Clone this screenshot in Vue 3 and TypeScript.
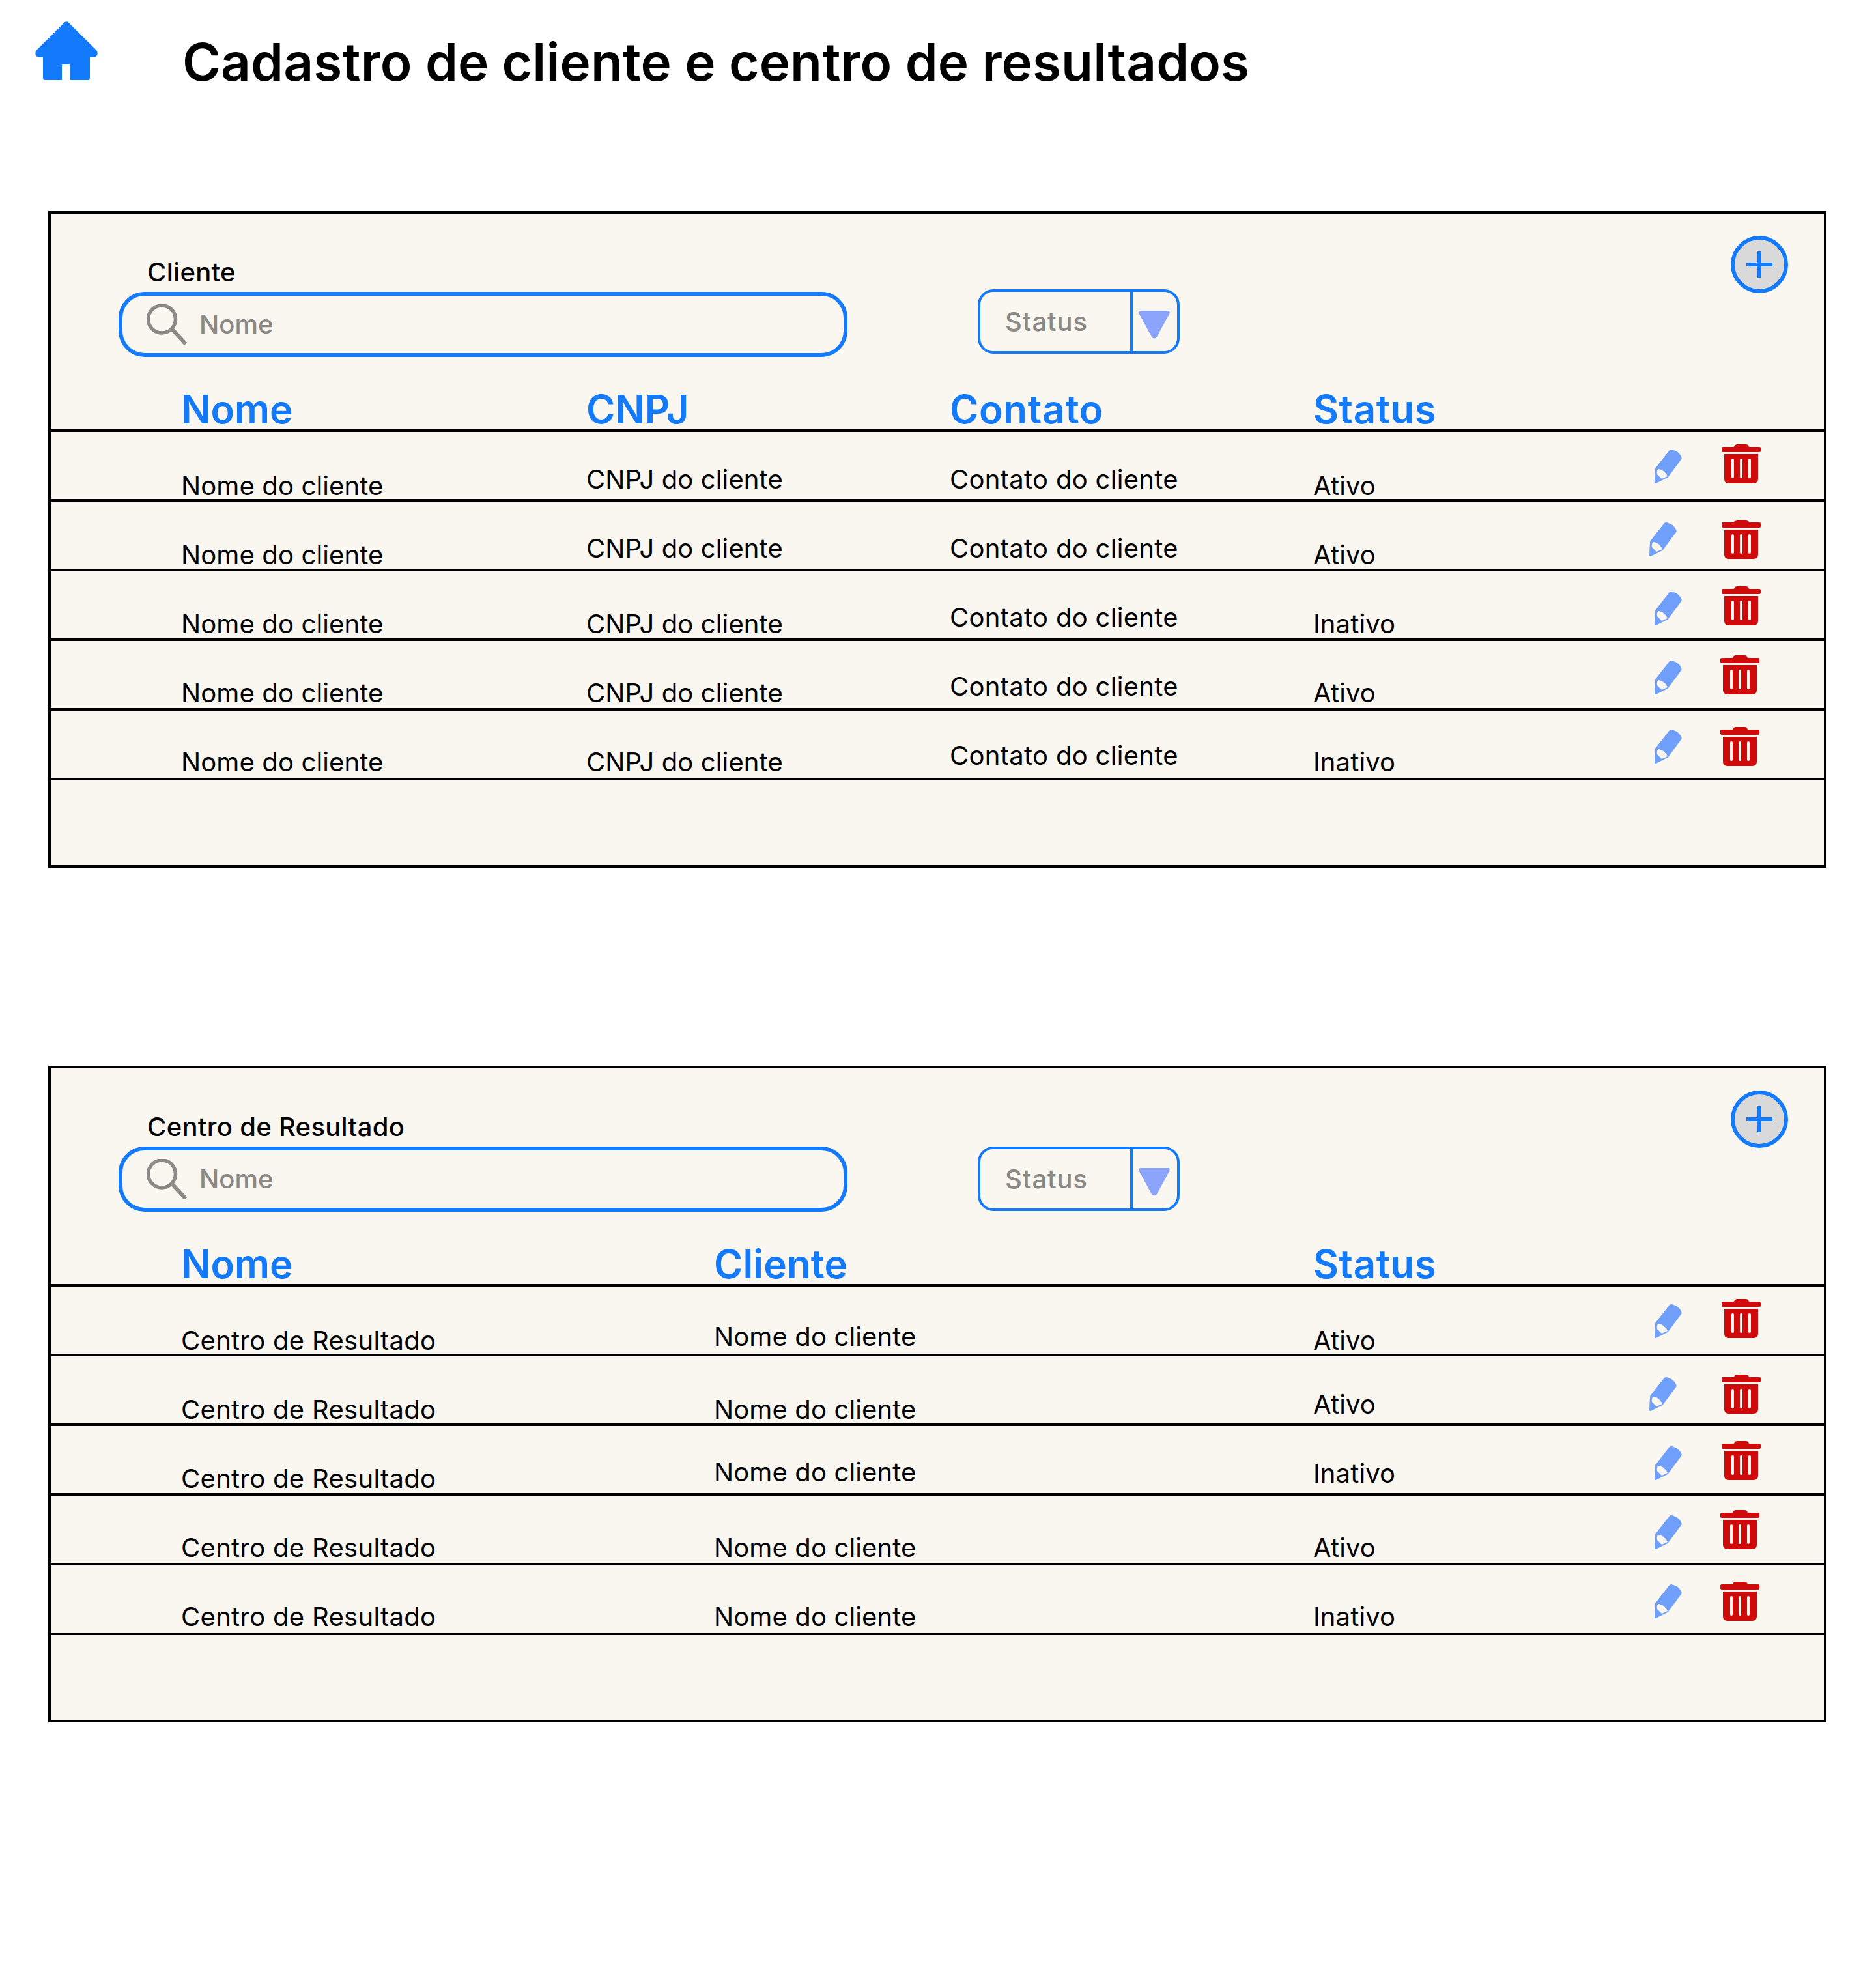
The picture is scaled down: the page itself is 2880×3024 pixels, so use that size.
<script setup lang="ts">
interface Cell {
  text: string;
  hi?: number;
  wide?: boolean;
}
interface Row {
  cells: Cell[];
  pencilTop: number;
  pencilLeft: number;
  trashTop: number;
  trashLeft: number;
}

const geometry = [
  { pencilTop: 27, pencilLeft: 0, trashTop: 19, trashLeft: 0 },
  { pencilTop: 32, pencilLeft: -8, trashTop: 28, trashLeft: 0 },
  { pencilTop: 31, pencilLeft: 0, trashTop: 23, trashLeft: 0 },
  { pencilTop: 30, pencilLeft: 0, trashTop: 22, trashLeft: -2 },
  { pencilTop: 29, pencilLeft: 0, trashTop: 25, trashLeft: -2 },
];

const statuses = ['Ativo', 'Ativo', 'Inativo', 'Ativo', 'Inativo'];

const clientRows: Row[] = geometry.map((g, i) => ({
  ...g,
  cells: [
    { text: 'Nome do cliente' },
    { text: 'CNPJ do cliente', hi: i < 2 ? 10 : 0 },
    { text: 'Contato do cliente', hi: 10, wide: true },
    { text: statuses[i] },
  ],
}));

const nameHi = [6, 0, 10, 0, 0];
const statusHi = [0, 8, 8, 0, 0];
const centerRows: Row[] = geometry.map((g, i) => ({
  ...g,
  cells: [
    { text: 'Centro de Resultado', wide: true },
    { text: 'Nome do cliente', hi: nameHi[i] },
    { text: statuses[i], hi: statusHi[i] },
  ],
}));

const panels = [
  {
    label: 'Cliente',
    cols: 'cols-client',
    select: '',
    headers: [
      { text: 'Nome', track: 0 },
      { text: 'CNPJ', track: 0 },
      { text: 'Contato', track: 0.8 },
      { text: 'Status', track: 0.6 },
    ],
    rows: clientRows,
  },
  {
    label: 'Centro de Resultado',
    cols: 'cols-center',
    select: 'select-low',
    headers: [
      { text: 'Nome', track: 0 },
      { text: 'Cliente', track: 0.2 },
      { text: 'Status', track: 0.6 },
    ],
    rows: centerRows,
  },
];
</script>

<template>
  <div class="page">
    <header class="top">
      <svg class="home" viewBox="0 0 96 90" width="96" height="90">
        <path fill="#147afc" d="M45 1.5Q48-1 51 1.5L94 44Q97 48 95 52Q93 55 89 55L84 55L84 87Q84 90 81 90L53 90L53 66L41 66L41 90L15 90Q12 90 12 87L12 55L7 55Q3 55 1 52Q-1 48 2 44Z" />
      </svg>
      <h1 class="title">Cadastro de cliente e centro de resultados</h1>
    </header>

    <section v-for="panel in panels" :key="panel.label" class="panel">
      <div class="toolbar">
        <div class="search-group">
          <div class="label">{{ panel.label }}</div>
          <div class="search">
            <svg class="lens" viewBox="0 0 62 62" width="62" height="62">
              <ellipse cx="23.5" cy="23" rx="21" ry="21" fill="none" stroke="#8a8985" stroke-width="5.5" />
              <path d="M39 38L60 61" fill="none" stroke="#8a8985" stroke-width="6" />
            </svg>
            <span class="placeholder">Nome</span>
          </div>
        </div>
        <div class="select" :class="panel.select">
          <span class="select-text">Status</span>
          <span class="select-arrow">
            <svg viewBox="0 0 48 43" width="48" height="43">
              <path fill="#8aa4fc" d="M3 0L45 0Q49 0 47 5L28 40Q24 45 20 40L1 5Q-1 0 3 0Z" />
            </svg>
          </span>
        </div>
        <button class="add" type="button" aria-label="Adicionar">
          <svg viewBox="0 0 40 40" width="40" height="40">
            <path d="M17 0H23V17H40V23H23V40H17V23H0V17H17Z" fill="#147afc" />
          </svg>
        </button>
      </div>

      <div class="grid head" :class="panel.cols">
        <div
          v-for="h in panel.headers"
          :key="h.text"
          class="head-cell"
          :style="{ letterSpacing: h.track + 'px' }"
        >{{ h.text }}</div>
      </div>

      <div
        v-for="(row, i) in panel.rows"
        :key="i"
        class="grid row"
        :class="panel.cols"
        :style="{ paddingBottom: i + 'px' }"
      >
        <div
          v-for="(cell, c) in row.cells"
          :key="c"
          class="cell"
          :class="{ wide: cell.wide }"
          :style="{ marginBottom: (cell.hi ?? 0) + 'px' }"
        >{{ cell.text }}</div>
        <div class="actions">
          <svg
            class="pencil"
            viewBox="0 0 42 52"
            width="42"
            height="52"
            :style="{ marginTop: row.pencilTop + 'px', marginLeft: row.pencilLeft + 'px' }"
          >
            <path fill="#6f9ffa" d="M1 29L23 1Q25-.5 28 .5Q39 4 41.5 12.5Q42 14 41 15L21 42Q20 43.5 18 44L2 52Q0 52.5 0 50.5Z" />
            <path fill="#faf7f0" d="M6 30Q15 31 20 41L11 45L4 38Q3 32 6 30Z" />
          </svg>
          <svg
            class="trash"
            viewBox="0 0 60 60"
            width="60"
            height="60"
            :style="{ marginTop: row.trashTop + 'px', marginLeft: row.trashLeft + 'px' }"
          >
            <path fill="#ce0a0a" d="M19 4Q20 0 24 0H37Q41 0 42 4H58Q60 4 60 6V10Q60 12 58 12H2Q0 12 0 10V6Q0 4 2 4Z" />
            <path fill="#ce0a0a" fill-rule="evenodd" d="M4 15H56V53Q56 60 49 60H11Q4 60 4 53ZM15 24V50Q15 52 17 52Q19 52 19 50V24Q19 22 17 22Q15 22 15 24ZM28 24V50Q28 52 30 52Q32 52 32 50V24Q32 22 30 22Q28 22 28 24ZM41 24V50Q41 52 43 52Q45 52 45 50V24Q45 22 43 22Q41 22 41 24Z" />
          </svg>
        </div>
      </div>

      <div class="tail"></div>
    </section>
  </div>
</template>

<style scoped>
.page {
  width: 2880px;
  height: 3024px;
  background: #fff;
  font-family: Inter, "Liberation Sans", sans-serif;
  color: #000;
  box-sizing: border-box;
  padding-left: 74px;
}
.top {
  height: 324px;
  display: flex;
  align-items: flex-start;
  margin-left: -20px;
}
.home {
  margin-top: 33px;
  flex: none;
}
.title {
  margin: 55px 0 0 130px;
  font-size: 80px;
  line-height: 80px;
  font-weight: 600;
  letter-spacing: 0.12px;
}
.panel {
  width: 2730px;
  height: 1008px;
  box-sizing: border-box;
  border: 4px solid #000;
  background: #faf7f0;
  margin-bottom: 304px;
  display: flex;
  flex-direction: column;
}
.toolbar {
  height: 220px;
  display: flex;
  align-items: flex-start;
  flex: none;
}
.search-group {
  margin-left: 104px;
  padding-top: 70px;
}
.label {
  margin-left: 44px;
  font-size: 40px;
  line-height: 40px;
  font-weight: 500;
  letter-spacing: 0.3px;
}
.search {
  margin-top: 10px;
  width: 1119px;
  height: 100px;
  box-sizing: border-box;
  border: 6px solid #147afc;
  border-radius: 40px;
  display: flex;
  align-items: flex-start;
  padding-left: 37px;
}
.lens {
  margin-top: 13px;
  flex: none;
}
.placeholder {
  margin: 24px 0 0 19px;
  font-size: 40px;
  line-height: 40px;
  font-weight: 500;
  color: #8a8985;
}
.select {
  margin: 116px 0 0 200px;
  width: 310px;
  height: 99px;
  box-sizing: border-box;
  border: 4px solid #147afc;
  border-radius: 24px;
  display: flex;
  flex: none;
}
.select-low {
  margin-top: 120px;
}
.select-text {
  width: 230px;
  box-sizing: border-box;
  padding: 26px 0 0 38px;
  font-size: 40px;
  line-height: 40px;
  font-weight: 500;
  letter-spacing: 0.9px;
  color: #8a8985;
}
.select-arrow {
  flex: 1;
  border-left: 4px solid #147afc;
  padding: 29px 0 0 9px;
}
.select-arrow svg {
  display: block;
}
.add {
  margin: 34px 55px 0 auto;
  width: 88px;
  height: 88px;
  padding: 18px 0 0 0;
  box-sizing: border-box;
  border: 6px solid #147afc;
  border-radius: 50%;
  background: #d9d9d9;
  display: flex;
  justify-content: center;
  align-items: flex-start;
  flex: none;
}
.grid {
  display: grid;
  padding-left: 200px;
  box-sizing: border-box;
  align-items: end;
  flex: none;
  border-bottom: 4px solid #000;
}
.cols-client {
  grid-template-columns: 622px 558px 558px 524px 1fr;
}
.cols-center {
  grid-template-columns: 818px 920px 524px 1fr;
}
.head {
  height: 115px;
}
.head-cell {
  font-size: 60px;
  line-height: 60px;
  font-weight: 600;
  color: #147afc;
  padding-bottom: 1px;
}
.row {
  height: 107px;
}
.cell {
  font-size: 40px;
  line-height: 40px;
  letter-spacing: 0.12px;
}
.wide {
  letter-spacing: 0.3px;
}
.actions {
  display: grid;
  grid-template-columns: 103px 60px;
  align-items: start;
  align-self: start;
}
.pencil {
  display: block;
}
.trash {
  display: block;
}
.tail {
  flex: 1;
}
</style>
